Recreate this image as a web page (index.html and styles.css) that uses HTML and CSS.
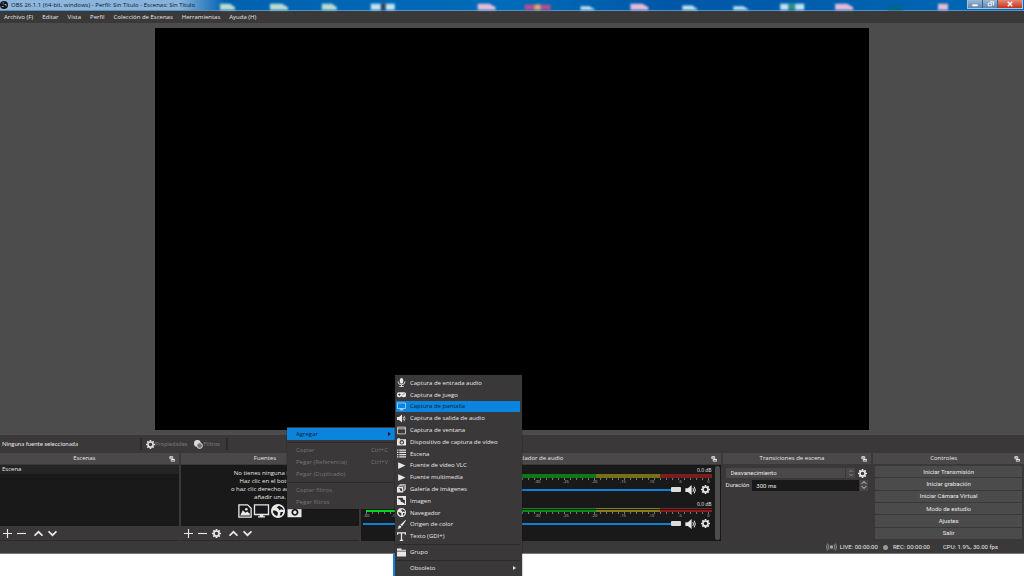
FILE: index.html
```html
<!DOCTYPE html>
<html lang="es">
<head>
    <meta charset="UTF-8">
    <meta name="viewport" content="width=device-width, initial-scale=1.0">
    <title>OBS 26.1.1 (64-bit, windows) - Perfil: Sin Título - Escenas: Sin Título</title>
    <link rel="stylesheet" href="styles.css">
</head>
<body>
    <!-- icon sprite -->
    <svg class="sprite" aria-hidden="true">
        <symbol id="i-gear" viewBox="0 0 16 16"><path fill="none" stroke="currentColor" stroke-width="3" d="M8 3.500a4.500 4.500 0 1 0 0 9a4.500 4.500 0 1 0 0-9z"/><path stroke="currentColor" stroke-width="3" d="M8 0v3M8 13v3M0 8h3M13 8h3M2.300 2.300l2 2M11.700 11.700l2 2M2.300 13.700l2-2M11.700 4.300l2-2"/></symbol>
        <symbol id="i-plus" viewBox="0 0 16 16"><path stroke="currentColor" stroke-width="2" d="M8 0v16M0 8h16"/></symbol>
        <symbol id="i-minus" viewBox="0 0 16 16"><path stroke="currentColor" stroke-width="2" d="M0 8h16"/></symbol>
        <symbol id="i-up" viewBox="0 0 16 16"><path fill="none" stroke="currentColor" stroke-width="3" d="M1 12l7-7 7 7"/></symbol>
        <symbol id="i-down" viewBox="0 0 16 16"><path fill="none" stroke="currentColor" stroke-width="3" d="M1 4l7 7 7-7"/></symbol>
        <symbol id="i-float" viewBox="0 0 16 16"><path fill="none" stroke="currentColor" stroke-width="2" d="M2 2h8v5H2zM6 9h9v5H6z"/><path fill="currentColor" d="M2 1h8v3H2zM6 8h9v3H6z"/></symbol>
        <symbol id="i-filter" viewBox="0 0 16 16"><circle cx="6" cy="6" r="6" fill="currentColor"/><circle cx="10" cy="10" r="5" fill="#777" stroke="currentColor" stroke-width="1.500"/></symbol>
        <symbol id="i-speaker" viewBox="0 0 18 16"><path fill="currentColor" d="M0 5h4l6-5v16l-6-5H0z"/><path fill="none" stroke="currentColor" stroke-width="1.600" d="M12 5q2 3 0 6M14 2.500q4 5.500 0 11"/></symbol>
        <symbol id="i-mic" viewBox="0 0 16 16"><rect x="5" y="0" width="6" height="10" rx="3" fill="currentColor"/><path fill="none" stroke="currentColor" stroke-width="1.600" d="M2 6v1q0 5 6 5t6-5V6M8 12v3M4 15.200h8"/></symbol>
        <symbol id="i-pad" viewBox="0 0 16 16"><path fill="currentColor" fill-rule="evenodd" d="M4 4h8a4 4 0 0 1 0 9q-2 0-3-1.500H7Q6 13 4 13a4 4 0 0 1 0-9zM3.500 6v1.500H2V9h1.500v1.500H5V9h1.500V7.500H5V6zM10 7.500h1.500V9H10zM12 6h1.500v1.500H12z"/></symbol>
        <symbol id="i-monitor" viewBox="0 0 18 16"><path fill="none" stroke="currentColor" stroke-width="1.500" d="M1 1h16v11H1z"/><path fill="currentColor" d="M7 12h4v2h2v1.500H5V14h2z"/></symbol>
        <symbol id="i-window" viewBox="0 0 16 16"><path fill="none" stroke="currentColor" stroke-width="1.400" d="M1 2h14v12H1zM1 5h14"/></symbol>
        <symbol id="i-camera" viewBox="0 0 16 16"><path fill="currentColor" fill-rule="evenodd" d="M0 4h1V2h4v2h11v11H0zM8.500 5.500a4 4 0 1 0 .01 0zM8.500 7.500a2 2 0 1 1-.01 0z"/></symbol>
        <symbol id="i-list" viewBox="0 0 16 16"><path stroke="currentColor" stroke-width="1.800" d="M0 2h2.500M4 2h12M0 6h2.500M4 6h12M0 10h2.500M4 10h12M0 14h2.500M4 14h12"/></symbol>
        <symbol id="i-play" viewBox="0 0 16 16"><path fill="currentColor" d="M2 2l13 6-13 6z"/></symbol>
        <symbol id="i-gallery" viewBox="0 0 16 16"><path fill="none" stroke="currentColor" stroke-width="1.300" d="M5 3V1h10v9h-2M3 5V3h10v9h-2"/><path fill="currentColor" fill-rule="evenodd" d="M0 5h11v10H0zM2 7l3 2 1 3 3 1V8z"/></symbol>
        <symbol id="i-image" viewBox="0 0 16 16"><path fill="currentColor" fill-rule="evenodd" d="M0 0h16v16H0zM2 3v2l4 2 1 3 3 1 4 3V7l-3-1-1-3z"/></symbol>
        <symbol id="i-globe" viewBox="0 0 16 16"><path fill="currentColor" fill-rule="evenodd" d="M8 0a8 8 0 1 0 .01 0zM9 2l4 2 1.500 3-3-1-2 1-1-2-2-1zM3 7l3 1 2 2-1 4-3-2-2-3zM11 9l3 0-2 4-2 0z"/></symbol>
        <symbol id="i-brush" viewBox="0 0 16 16"><path fill="currentColor" d="M15 0l1 1-7 10-3-2.500zM5 9.500l3 2.500q-1 4-8 3.500 3-1 2.500-3.500 0-2 2.500-2.500z"/></symbol>
        <symbol id="i-text" viewBox="0 0 16 16"><path stroke="currentColor" stroke-width="2.200" fill="none" d="M8 1v14M1 5V1.500h14V5M5 15h6"/></symbol>
        <symbol id="i-folder" viewBox="0 0 16 16"><path fill="currentColor" d="M0 1h8v2h8v2H0zM0 6h16v9H0z"/></symbol>
        <symbol id="i-picture" viewBox="0 0 16 16"><path fill="none" stroke="currentColor" stroke-width="1.500" d="M1 1h10l4 4v10H1z"/><path fill="currentColor" d="M2.500 13l3-6 3 3 2-1.500 3 2.500v2z"/><circle cx="9.500" cy="6" r="1.500" fill="currentColor"/></symbol>
        <symbol id="i-live" viewBox="0 0 22 16"><circle cx="11" cy="8" r="3.500" fill="currentColor"/><path fill="none" stroke="currentColor" stroke-width="1.500" d="M6 3q-3 5 0 10M16 3q3 5 0 10M3 1q-4 7 0 14M19 1q4 7 0 14"/></symbol>
    </svg>

    <div class="app">
        <header class="titlebar">
            <svg class="logo" viewBox="0 0 16 16"><circle cx="8" cy="8" r="8" fill="#15151c"/><path fill="#c8ccd4" d="M5 3q0 4 3.500 4Q6 6 7 2.500zM13 7q-3-2-4.500 1 3-.5 4.500 2.500zM4 12q4 1 4-2.500-2 2-5 .5z"/></svg>
            <span class="title">OBS 26.1.1 (64-bit, windows) - Perfil: Sin Título - Escenas: Sin Título</span>
            <svg class="desktop-icons" viewBox="220 0 730 11" preserveAspectRatio="none" aria-hidden="true">
                <g fill="#b9dcd2"><path d="M220 4h10l5 4v3h-15zM270 4h12l6 4v3h-18zM322 4h10l5 4v3h-15z"/></g>
                <g fill="#bfe2f5"><path d="M371 4h24v7h-24zM581 7h9l6 4h-15zM683 6h10l6 5h-16zM734 7h10l6 4h-16zM781 4h24v7h-24z"/></g>
                <g fill="#e3bcdc"><path d="M478 4h12l6 4v3h-18zM631 4h12l6 4v3h-18zM836 4h12l6 4v3h-18zM939 4h10v7h-10z"/></g>
                <path fill="#b0508f" d="M525 5h26v6h-26z"/><path fill="#d5ae70" d="M535 5h6v6h-6z"/>
                <path fill="#2d4058" d="M381 4h5v7h-5z"/><path fill="#318a83" d="M789 4h7v7h-7z"/><path fill="#046583" d="M889 6h12l4 5h-16z"/>
            </svg>
            <div class="window-buttons">
                <button class="win" aria-label="Minimizar"><svg viewBox="0 0 14 9"><path stroke="#fff" stroke-width="2" d="M4 6h6"/></svg></button>
                <button class="win" aria-label="Restaurar"><svg viewBox="0 0 14 9"><path fill="none" stroke="#fff" d="M5 3.500h4v3H5zM7 2h4v4"/></svg></button>
                <button class="win close" aria-label="Cerrar"><svg viewBox="0 0 14 9"><path stroke="#fff" stroke-width="1.500" d="M4.500 2l5 5M9.500 2l-5 5"/></svg></button>
            </div>
        </header>

        <nav class="menubar">
            <button>Archivo (F)</button>
            <button>Editar</button>
            <button>Vista</button>
            <button>Perfil</button>
            <button>Colección de Escenas</button>
            <button>Herramientas</button>
            <button>Ayuda (H)</button>
        </nav>

        <main class="preview">
            <div class="canvas"></div>
        </main>

        <div class="context-bar">
            <span class="selected">Ninguna fuente seleccionada</span>
            <button disabled><svg class="icon"><use href="#i-gear"/></svg>Propiedades</button>
            <button disabled><svg class="icon"><use href="#i-filter"/></svg>Filtros</button>
            <span class="divider"></span>
        </div>

        <div class="docks">
            <section class="dock scenes">
                <h2>Escenas<svg class="float"><use href="#i-float"/></svg></h2>
                <ul class="list">
                    <li>Escena</li>
                </ul>
                <div class="toolbar">
                    <button aria-label="Agregar escena"><svg class="icon"><use href="#i-plus"/></svg></button>
                    <button aria-label="Quitar escena"><svg class="icon"><use href="#i-minus"/></svg></button>
                    <button class="gap" aria-label="Subir"><svg class="icon"><use href="#i-up"/></svg></button>
                    <button aria-label="Bajar"><svg class="icon"><use href="#i-down"/></svg></button>
                </div>
            </section>

            <section class="dock sources">
                <h2>Fuentes<svg class="float"><use href="#i-float"/></svg></h2>
                <div class="list empty">
                    <p>No tienes ninguna fuente.<br>Haz clic en el botón +,<br>o haz clic derecho aquí para<br>añadir una.</p>
                    <div class="empty-icons">
                        <svg><use href="#i-picture"/></svg>
                        <svg class="wide"><use href="#i-monitor"/></svg>
                        <svg><use href="#i-globe"/></svg>
                        <svg class="wide"><use href="#i-camera"/></svg>
                    </div>
                </div>
                <div class="toolbar">
                    <button aria-label="Agregar fuente"><svg class="icon"><use href="#i-plus"/></svg></button>
                    <button aria-label="Quitar fuente"><svg class="icon"><use href="#i-minus"/></svg></button>
                    <button aria-label="Propiedades"><svg class="icon"><use href="#i-gear"/></svg></button>
                    <button class="gap" aria-label="Subir"><svg class="icon"><use href="#i-up"/></svg></button>
                    <button aria-label="Bajar"><svg class="icon"><use href="#i-down"/></svg></button>
                </div>
            </section>

            <section class="dock mixer">
                <h2>Mezclador de audio<svg class="float"><use href="#i-float"/></svg></h2>
                <div class="mixer-body">
                    <div class="channels">
                        <div class="channel">
                            <div class="db">0.0 dB</div>
                            <div class="meter"></div>
                            <div class="ticks"></div>
                            <div class="scale"><span>-60</span><span>-55</span><span>-50</span><span>-45</span><span>-40</span><span>-35</span><span>-30</span><span>-25</span><span>-20</span><span>-15</span><span>-10</span><span>-5</span><span>0</span></div>
                            <div class="volume">
                                <input type="range" min="0" max="100" value="100" aria-label="Volumen del escritorio">
                                <button aria-label="Silenciar"><svg class="speaker"><use href="#i-speaker"/></svg></button>
                                <button aria-label="Ajustes de audio"><svg class="icon"><use href="#i-gear"/></svg></button>
                            </div>
                        </div>
                        <div class="channel">
                            <div class="db">0.0 dB</div>
                            <div class="meter stereo"></div>
                            <div class="ticks"></div>
                            <div class="scale"><span>-60</span><span>-55</span><span>-50</span><span>-45</span><span>-40</span><span>-35</span><span>-30</span><span>-25</span><span>-20</span><span>-15</span><span>-10</span><span>-5</span><span>0</span></div>
                            <div class="volume">
                                <input type="range" min="0" max="100" value="100" aria-label="Volumen del micrófono">
                                <button aria-label="Silenciar"><svg class="speaker"><use href="#i-speaker"/></svg></button>
                                <button aria-label="Ajustes de audio"><svg class="icon"><use href="#i-gear"/></svg></button>
                            </div>
                        </div>
                    </div>
                    <div class="scrollbar"></div>
                </div>
            </section>

            <section class="dock transitions">
                <h2>Transiciones de escena<svg class="float"><use href="#i-float"/></svg></h2>
                <div class="row">
                    <div class="select-wrap">
                        <select aria-label="Transición"><option>Desvanecimiento</option></select>
                        <span class="stepper"><svg><use href="#i-up"/></svg><svg><use href="#i-down"/></svg></span>
                    </div>
                    <button aria-label="Propiedades de transición"><svg class="icon"><use href="#i-gear"/></svg></button>
                </div>
                <div class="row">
                    <label for="duration">Duración</label>
                    <input type="text" id="duration" value="300 ms">
                    <span class="stepper light"><svg><use href="#i-up"/></svg><svg><use href="#i-down"/></svg></span>
                </div>
            </section>

            <section class="dock controls">
                <h2>Controles<svg class="float"><use href="#i-float"/></svg></h2>
                <div class="control-list">
                    <button>Iniciar Transmisión</button>
                    <button>Iniciar grabación</button>
                    <button>Iniciar Cámara Virtual</button>
                    <button>Modo de estudio</button>
                    <button>Ajustes</button>
                    <button>Salir</button>
                </div>
            </section>
        </div>

        <footer class="statusbar">
            <span class="live"><svg class="live-icon"><use href="#i-live"/></svg>LIVE: 00:00:00</span>
            <span class="rec"><i class="dot"></i>REC: 00:00:00</span>
            <span class="cpu">CPU: 1.9%, 30.00 fps</span>
        </footer>
    </div>

    <div class="menu context-menu">
        <button class="active">Agregar<span class="arrow"></span></button>
        <hr>
        <button disabled>Copiar<kbd>Ctrl+C</kbd></button>
        <button disabled>Pegar (Referencia)<kbd>Ctrl+V</kbd></button>
        <button disabled>Pegar (Duplicado)</button>
        <hr>
        <button disabled>Copiar filtros</button>
        <button disabled>Pegar filtros</button>
    </div>

    <div class="menu submenu">
        <div class="menu-group">
            <button><svg><use href="#i-mic"/></svg>Captura de entrada audio</button>
            <button><svg><use href="#i-pad"/></svg>Captura de juego</button>
            <button class="active"><svg><use href="#i-monitor"/></svg>Captura de pantalla</button>
            <button><svg><use href="#i-speaker"/></svg>Captura de salida de audio</button>
            <button><svg><use href="#i-window"/></svg>Captura de ventana</button>
            <button><svg><use href="#i-camera"/></svg>Dispositivo de captura de vídeo</button>
            <button><svg><use href="#i-list"/></svg>Escena</button>
            <button><svg><use href="#i-play"/></svg>Fuente de vídeo VLC</button>
            <button><svg><use href="#i-play"/></svg>Fuente multimedia</button>
            <button><svg><use href="#i-gallery"/></svg>Galería de imágenes</button>
            <button><svg><use href="#i-image"/></svg>Imagen</button>
            <button><svg><use href="#i-globe"/></svg>Navegador</button>
            <button><svg><use href="#i-brush"/></svg>Origen de color</button>
            <button><svg><use href="#i-text"/></svg>Texto (GDI+)</button>
        </div>
        <hr>
        <button><svg><use href="#i-folder"/></svg>Grupo</button>
        <hr>
        <button class="no-icon">Obsoleto<span class="arrow"></span></button>
    </div>
</body>
</html>
```

FILE: styles.css
```css
* {
    box-sizing: border-box;
}
body {
    margin: 0;
    height: 100vh;
    padding-bottom: 22px;
    overflow: hidden;
    background: #fff;
    color: #e8e8e8;
    font-family: "Open Sans", "Noto Sans", sans-serif;
    font-size: 6px;
    line-height: 8px;
}
button, input, select {
    font: inherit;
    color: inherit;
    margin: 0;
    padding: 0;
    border: none;
    background: none;
}
svg {
    display: block;
    flex: none;
}
.sprite {
    position: absolute;
    width: 0;
    height: 0;
}
.icon {
    width: 9px;
    height: 9px;
}
.app {
    height: 100%;
    display: flex;
    flex-direction: column;
    background: #3a3838;
    border-bottom: 1px solid #777;
}

/* title bar */
.titlebar {
    height: 11px;
    display: flex;
    align-items: center;
    background: linear-gradient(90deg, #8fb8de 0, #86b2dc 180px, transparent 225px), linear-gradient(100deg, #0059a9, #006cb9 50%, #0057a7 65%, #0069b6);
    border-bottom: 1px solid #4b94c8;
    color: #101820;
}
.logo {
    width: 8px;
    height: 8px;
    margin-right: 3px;
}
.title {
    white-space: nowrap;
    width: 209px;
    flex: none;
}
.desktop-icons {
    flex: 1;
    height: 10px;
    filter: blur(1px);
}
.window-buttons {
    display: flex;
    align-self: flex-start;
    margin: 0 1px 0 18px;
    border: 1px solid #a9c4dc;
    border-top: none;
}
.win {
    width: 15px;
    height: 8px;
    background: linear-gradient(#9db9d3, #5e86ae);
    border-right: 1px solid #3e6288;
}
.win svg {
    width: 14px;
    height: 8px;
}
.win.close {
    width: 24px;
    border: none;
    background: linear-gradient(#e08a78, #c8301c);
}
.win.close svg {
    width: 24px;
}

/* menu bar */
.menubar {
    height: 12px;
    display: flex;
    align-items: center;
    gap: 9px;
    padding-left: 4px;
}

.preview {
    flex: 1;
    min-height: 0;
    padding: 5px 0;
    display: flex;
    justify-content: center;
    background: #4c4c4c;
}
.canvas {
    height: 100%;
    aspect-ratio: 16 / 9;
    background: #000;
}

.context-bar {
    height: 18px;
    display: flex;
    align-items: center;
    padding-left: 2px;
    font-family: Lato, sans-serif;
}
.selected {
    width: 140px;
    border-right: 2px solid #2b2a2a;
    line-height: 12px;
}
.context-bar button {
    display: flex;
    align-items: center;
    margin-left: 4px;
    color: #777;
}
.context-bar button + button {
    margin-left: 7px;
}
.context-bar .icon {
    color: #dcdcdc;
}
.divider {
    width: 2px;
    height: 12px;
    margin-left: 6px;
    background: #2b2a2a;
}

/* docks */
.docks {
    display: grid;
    grid-template-columns: 179fr 179fr 360fr 149fr 151fr;
    gap: 2px;
    height: 88px;
}
.dock {
    display: flex;
    flex-direction: column;
    min-width: 0;
}
.dock h2 {
    position: relative;
    margin: 0 0 1px;
    height: 11px;
    line-height: 11px;
    font-size: 6px;
    font-weight: normal;
    text-align: center;
    padding-right: 10px;
    background: #4a4849;
}
.float {
    position: absolute;
    right: 4px;
    top: 3px;
    width: 6px;
    height: 6px;
}
.list {
    flex: 1;
    min-height: 0;
    margin: 0;
    padding: 0;
    list-style: none;
    background: #191919;
}
.list li {
    height: 9px;
    line-height: 9px;
    padding-left: 2px;
    background: #252424;
}
.toolbar {
    height: 15px;
    display: flex;
    align-items: center;
    gap: 5px;
    padding-left: 3px;
    border-bottom: 1px solid #2c2b2b;
}
.toolbar .gap {
    margin-left: 3px;
}
.empty {
    text-align: center;
    padding-top: 4px;
}
.empty p {
    margin: 0;
}
.empty-icons {
    display: flex;
    justify-content: center;
    gap: 1px;
    margin-top: 3px;
    padding-left: 1px;
}
.empty-icons svg {
    width: 14px;
    height: 14px;
}
.empty-icons .wide {
    width: 17px;
}

/* audio mixer */
.mixer-body {
    flex: 1;
    display: flex;
    padding: 1px 1px 1px 2px;
    background: #191919;
}
.channels {
    flex: 1;
    padding-right: 3px;
}
.channel {
    height: 34px;
}
.db {
    height: 8px;
    text-align: right;
    font-size: 5px;
}
.meter {
    height: 4px;
    margin-left: 3px;
    background: linear-gradient(90deg, #0c7a18 66.6%, #77701a 66.6%, #77701a 85%, #7b1d1d 85%);
}
.meter.stereo {
    background: linear-gradient(transparent 1px, #191919 1px, #191919 2px, transparent 2px), linear-gradient(90deg, #00d820 35%, #0c8a18 35%, #0c8a18 66.6%, #857d1a 66.6%, #857d1a 85%, #8b1d1d 85%);
}
.ticks {
    height: 2px;
    margin-left: 3px;
    background: repeating-linear-gradient(90deg, #777 0, #777 1px, transparent 1px, transparent 6px);
}
.scale {
    display: flex;
    justify-content: space-between;
    height: 4px;
    line-height: 4px;
    font-size: 4px;
    color: #bbb;
}
.scale span {
    width: 6px;
    text-align: center;
}
.volume {
    display: flex;
    align-items: center;
    height: 11px;
    gap: 4px;
    padding-right: 2px;
}
.volume input {
    flex: 1;
    min-width: 0;
    height: 6px;
    appearance: none;
    background: linear-gradient(#191919 2px, #0d80d8 2px, #0d80d8 4px, #191919 4px);
}
.volume input::-webkit-slider-thumb {
    appearance: none;
    width: 10px;
    height: 5px;
    border-radius: 1px;
    background: #dcdcdc;
}
.speaker {
    width: 12px;
    height: 10px;
}
.scrollbar {
    width: 5px;
    border-radius: 3px;
    background: #4c4c4c;
}

/* transitions */
.row {
    display: flex;
    align-items: center;
    gap: 3px;
    height: 12px;
    margin: 2px 4px 0 3px;
    font-family: Roboto, sans-serif;
}
.row + .row {
    margin: 0 3px;
}
.select-wrap {
    flex: 1;
    height: 10px;
    display: flex;
    background: #4a4848;
    border-radius: 1px;
}
.select-wrap select {
    flex: 1;
    appearance: none;
    padding-left: 5px;
}
.row input {
    flex: 1;
    min-width: 0;
    height: 11px;
    padding-left: 4px;
    background: #191919;
}
.stepper {
    display: flex;
    flex-direction: column;
    justify-content: center;
    align-items: center;
    width: 10px;
    border-left: 1px solid #3a3838;
    color: #999;
}
.stepper svg {
    width: 4px;
    height: 4px;
}
.stepper.light {
    width: 8px;
    height: 11px;
    margin-left: -2px;
    border: none;
    background: #4a4848;
    color: #dcdcdc;
}
.stepper.light svg {
    width: 6px;
    height: 5px;
}

/* controls */
.control-list {
    display: grid;
    grid-auto-rows: 1fr;
    gap: 1px;
    height: 73px;
    margin: 1px 2px 0;
    font-family: Roboto, sans-serif;
}
.control-list button {
    background: #4c4b4b;
    border-radius: 1px;
}

.statusbar {
    height: 12px;
    display: flex;
    align-items: center;
    justify-content: flex-end;
    gap: 5px;
    padding-right: 26px;
    font-family: Roboto, sans-serif;
}
.statusbar span {
    display: flex;
    align-items: center;
}
.live-icon {
    width: 11px;
    height: 8px;
    margin-right: 3px;
    color: #aaa;
}
.dot {
    width: 5px;
    height: 5px;
    margin-right: 5px;
    border-radius: 50%;
    background: #999;
}
.statusbar .rec {
    margin-right: 8px;
}

/* popup menus */
.menu {
    position: absolute;
    background: #3a3838;
    box-shadow: 0 0 1px #111;
}
.menu button {
    display: flex;
    align-items: center;
    width: 100%;
    height: 12px;
    text-align: left;
    white-space: nowrap;
}
.menu button:disabled {
    color: #777;
}
.menu .active {
    background: #0a84dd;
    color: #0c1c2c;
}
.menu hr {
    margin: 2px 0 1px;
    border: none;
    border-top: 1px solid #2c2b2b;
}
.arrow {
    margin-left: auto;
    margin-right: 4px;
    border: 2px solid transparent;
    border-left: 3px solid currentColor;
    border-right: none;
}
.context-menu {
    left: 287px;
    top: 427px;
    width: 108px;
    padding: 1px 0;
}
.context-menu button {
    padding-left: 9px;
}
.context-menu kbd {
    margin-left: auto;
    margin-right: 7px;
    font: inherit;
}
.submenu {
    left: 395px;
    top: 375px;
    width: 127px;
    height: 210px;
    padding: 2px 2px 2px 1px;
}
.menu-group {
    display: grid;
    grid-auto-rows: 1fr;
    height: 165px;
}
.submenu .menu-group button {
    height: auto;
}
.submenu svg {
    width: 9px;
    height: 9px;
    margin: 0 4px 0 1px;
}
.submenu .active svg {
    color: #b8dcf8;
}
.submenu .no-icon {
    padding-left: 14px;
}
/* window edge showing past the bottom of the app */
.submenu::before {
    content: "";
    position: absolute;
    left: -2px;
    bottom: 0;
    width: 2px;
    height: 31px;
    background: #0a84dd;
}
```
